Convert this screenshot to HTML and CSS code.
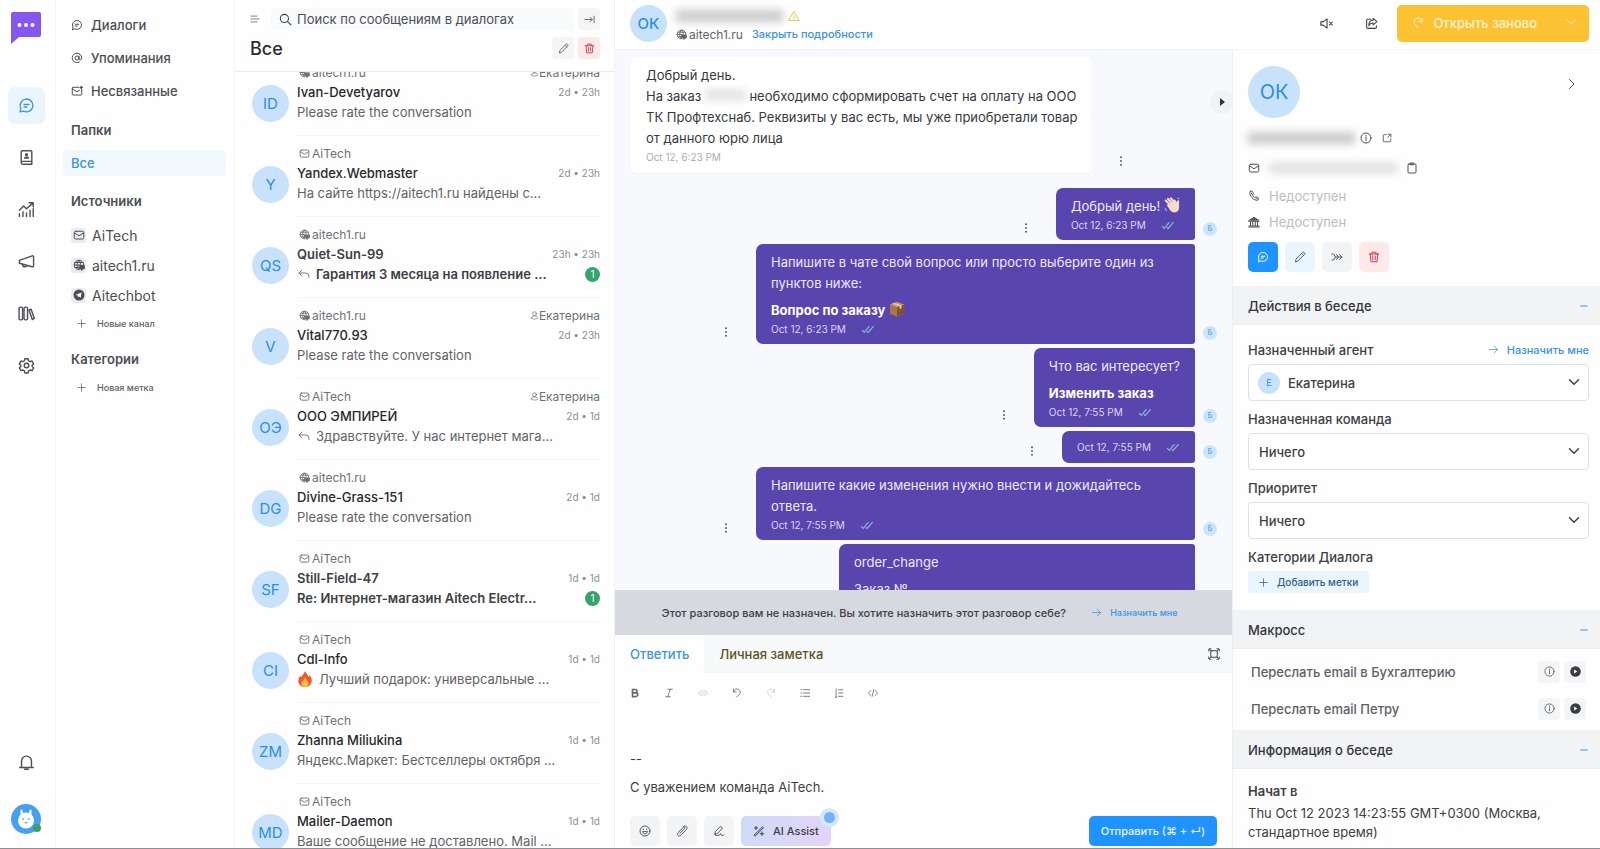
FILE: index.html
```
<!DOCTYPE html>
<html lang="ru">
<head>
  <meta charset="UTF-8">
  <meta name="viewport" content="width=device-width, initial-scale=1">
  <title>Диалоги</title>
  <link rel="stylesheet" href="styles.css">
</head>
<body>

  <svg class="sprite" aria-hidden="true">
    <symbol id="i-chat" viewBox="0 0 24 24"><path d="M3 21l1-5a9 9 0 1 1 4 4z"/><path d="M8.5 10.5h7M8.5 14h4"/></symbol>
    <symbol id="i-contact" viewBox="0 0 24 24"><path d="M6 2.5h12A1.5 1.5 0 0 1 19.5 4v17.5H6.5a2 2 0 0 1-2-2V4A1.5 1.5 0 0 1 6 2.5zM4.5 19a2 2 0 0 1 2-1.5h13"/><circle cx="12" cy="8" r="1.2" fill="currentColor"/><path d="M9.200 12.800c.5-1.800 5.100-1.800 5.600 0z" fill="currentColor"/></symbol>
    <symbol id="i-report" viewBox="0 0 24 24"><path d="M2 13l6-6 4 4 9-8M15.500 2.500H21.500V8.500M2 18v4M7 15v7M12 17v5M17 13v9M21.500 11v11"/></symbol>
    <symbol id="i-horn" viewBox="0 0 24 24"><path d="M2 10.500L20 4a1.500 1.500 0 0 1 2 1.400V18a1.500 1.500 0 0 1-2 1.400L2 14.500zM6 16c.5 4 5.500 4.500 6.500 1.500"/></symbol>
    <symbol id="i-library" viewBox="0 0 24 24"><rect x="1.500" y="3" width="5" height="18" rx="2"/><rect x="8.500" y="3" width="5" height="18" rx="2"/><path d="M15.500 7l3-1 4.500 13-2.800 1.500z"/></symbol>
    <symbol id="i-gear" viewBox="0 0 24 24"><circle cx="12" cy="12" r="3.200"/><path d="M9.700 2.500h4.600l.6 2.800 2.200 1.300 2.700-.9 2.300 4-2.100 1.900v1.800l2.100 1.900-2.300 4-2.700-.9-2.200 1.300-.6 2.800H9.700l-.6-2.800-2.200-1.300-2.700.9-2.300-4L4 13.400v-1.800L1.900 9.700l2.300-4 2.700.9 2.200-1.300z"/></symbol>
    <symbol id="i-bell" viewBox="0 0 24 24"><path d="M5 19V10a7 7 0 0 1 14 0v9M2.500 19h19M9.500 21.500h5"/></symbol>
    <symbol id="i-at" viewBox="0 0 24 24"><circle cx="12" cy="12" r="4"/><path d="M16 8v5.500c0 4 5.500 3 5.500-1.500A9.500 9.500 0 1 0 17 20"/></symbol>
    <symbol id="i-mail" viewBox="0 0 24 24"><rect x="2.500" y="4.500" width="19" height="15.500" rx="3"/><path d="M3 8l9 5.500L21 8"/></symbol>
    <symbol id="i-mail-dot" viewBox="0 0 24 24"><path d="M16 4.500H4A1.500 1.500 0 0 0 2.500 6v12.500A1.500 1.500 0 0 0 4 20h16a1.500 1.500 0 0 0 1.500-1.500V9M3 8l9 5.500 5-3"/><circle cx="20.500" cy="5" r="2" fill="currentColor"/></symbol>
    <symbol id="i-globe" viewBox="0 0 24 24"><path d="M12 21.500a9.500 9.500 0 1 1 9.500-9.500M2.500 12H13M4 7h16M4 17h7M12 2.500c-5.500 5-5.500 14 0 19M12 2.500c2 2 3.500 5 3.700 8.500"/><path d="M13 13h9.500v6.500H19L17.500 23 16 19.500h-3z" fill="currentColor"/></symbol>
    <symbol id="i-telegram" viewBox="0 0 24 24"><circle cx="12" cy="12" r="11" fill="currentColor" stroke="none"/><path d="M5 12l12-5-1.500 10.500-4-3-1.500 2-.8-3.500z" fill="#fff" stroke="none"/></symbol>
    <symbol id="i-plus" viewBox="0 0 24 24"><path d="M12 2v20M2 12h20"/></symbol>
    <symbol id="i-minus" viewBox="0 0 24 24"><path d="M2 12h20"/></symbol>
    <symbol id="i-menu" viewBox="0 0 24 24"><path d="M2 5h15M2 12h20M2 19h15"/></symbol>
    <symbol id="i-search" viewBox="0 0 24 24"><circle cx="10" cy="10" r="7.500"/><path d="M15.500 15.500L22 22"/></symbol>
    <symbol id="i-collapse" viewBox="0 0 24 24"><path d="M2 12h16M13 7l5 5-5 5M22 5v14"/></symbol>
    <symbol id="i-pencil" viewBox="0 0 24 24"><path d="M3 21l1.200-5L17.500 2.800a2 2 0 0 1 2.800 0l1 1a2 2 0 0 1 0 2.800L8 19.800zM15.500 5l3.800 3.800"/></symbol>
    <symbol id="i-trash" viewBox="0 0 24 24"><path d="M2.500 6h19M8 6V2.500h8V6M4.500 6l1.500 15.500h12L19.500 6M9.500 10v7.500M14.500 10v7.500"/></symbol>
    <symbol id="i-user" viewBox="0 0 24 24"><circle cx="12" cy="7" r="5"/><path d="M3.500 18.500c0-7 17-7 17 0 0 4-17 4-17 0z"/></symbol>
    <symbol id="i-reply" viewBox="0 0 24 24"><path d="M8 4L2 10l6 6M2 10h13a7 7 0 0 1 7 7v2"/></symbol>
    <symbol id="i-warn" viewBox="0 0 24 24"><path d="M12 3l10 18H2zM12 10v5M12 17v1.500"/></symbol>
    <symbol id="i-mute" viewBox="0 0 24 24"><path d="M1.500 9v6H6l7 5.500V3.500L6 9zM17.500 9.500l5 5M22.500 9.500l-5 5"/></symbol>
    <symbol id="i-share" viewBox="0 0 24 24"><path d="M11 4H5a2 2 0 0 0-2 2v13a2 2 0 0 0 2 2h14a2 2 0 0 0 2-2v-3M15 2.500l7 6-7 6V11c-4 0-6 1-8 5 0-7 3-10 8-10z"/></symbol>
    <symbol id="i-redo" viewBox="0 0 24 24"><path d="M20.500 3v6.500H14M20 9A8 8 0 1 0 8 17l5 5"/></symbol>
    <symbol id="i-undo" viewBox="0 0 24 24"><path d="M3.500 3v6.500H10M4 9a8 8 0 1 1 12 8l-5 5"/></symbol>
    <symbol id="i-down" viewBox="0 0 24 24"><path d="M3 7.500l9 9 9-9"/></symbol>
    <symbol id="i-right" viewBox="0 0 24 24"><path d="M7 3l9 9-9 9"/></symbol>
    <symbol id="i-arrow" viewBox="0 0 24 24"><path d="M1 12h22M14 3l9 9-9 9"/></symbol>
    <symbol id="i-dots" viewBox="0 0 24 24"><g fill="currentColor" stroke="none"><circle cx="12" cy="3" r="2.200"/><circle cx="12" cy="12" r="2.200"/><circle cx="12" cy="21" r="2.200"/></g></symbol>
    <symbol id="i-ticks" viewBox="0 0 24 16"><path d="M1.500 9l4 4L14.500 2M10 11.500l2 2L22 2"/></symbol>
    <symbol id="i-expand" viewBox="0 0 24 24"><rect x="5.500" y="5.500" width="13" height="13" rx="2"/><path d="M1.500 6V3a1.500 1.500 0 0 1 1.500-1.500h3M18 1.500h3A1.500 1.500 0 0 1 22.500 3v3M22.500 18v3a1.500 1.500 0 0 1-1.500 1.500h-3M6 22.500H3A1.500 1.500 0 0 1 1.500 21v-3M2.500 2.500l3.500 3.500M21.500 2.500L18 6M21.500 21.500L18 18M2.500 21.500L6 18"/></symbol>
    <symbol id="i-bold" viewBox="0 0 24 24"><path d="M6 3.500h7a4 4 0 0 1 0 8H6zM6 11.500h8a4.500 4.500 0 0 1 0 9H6z"/></symbol>
    <symbol id="i-italic" viewBox="0 0 24 24"><path d="M9 3h11M4 21h11M15 3L9 21"/></symbol>
    <symbol id="i-link" viewBox="0 0 24 24"><path d="M10 7H7a5 5 0 0 0 0 10h3M14 7h3a5 5 0 0 1 0 10h-3M8 12h8"/></symbol>
    <symbol id="i-ul" viewBox="0 0 24 24"><path d="M8 4h15M8 12h15M8 20h15M2 4h2M2 12h2M2 20h2"/></symbol>
    <symbol id="i-ol" viewBox="0 0 24 24"><path d="M11 4h10M11 12h10M11 20h10M5 2v7M5 11v4M5 17v5M3 22h4"/></symbol>
    <symbol id="i-code" viewBox="0 0 24 24"><path d="M7 6l-6 6 6 6M17 6l6 6-6 6M14 4l-4 16"/></symbol>
    <symbol id="i-smile" viewBox="0 0 24 24"><circle cx="12" cy="12" r="10"/><path d="M7 14c1.500 5 8.500 5 10 0zM8.500 8v1.500M15.500 8v1.500"/></symbol>
    <symbol id="i-clip" viewBox="0 0 24 24"><path d="M8 17L17 7c2-2-.5-4.500-2.500-2.500L4.500 15c-4 4.500 1.500 9.500 5.500 5.500L20.500 9.500C25 4 19 0 15 3"/></symbol>
    <symbol id="i-sign" viewBox="0 0 24 24"><path d="M4 18l1-5L15 2.500l4 3.500L9 17zM4 18c-3 4 8 4 10 1 1-3 3-2 2 1 2 1.500 4 1.500 6 0"/></symbol>
    <symbol id="i-wand" viewBox="0 0 24 24"><path d="M2.500 20L19 3.500l2 2L4.500 22zM6 3v6M3 6h6M18 14v7M14.500 17.500h7"/></symbol>
    <symbol id="i-info" viewBox="0 0 24 24"><circle cx="12" cy="12" r="10"/><path d="M12 10.500V17M12 6.500v1.500"/></symbol>
    <symbol id="i-open" viewBox="0 0 24 24"><path d="M10 4H5a2 2 0 0 0-2 2v13a2 2 0 0 0 2 2h14a2 2 0 0 0 2-2v-5M15 3h6.500v6.500M21 3l-7 7"/></symbol>
    <symbol id="i-board" viewBox="0 0 24 24"><rect x="4" y="4" width="16" height="18" rx="2"/><path d="M9 2h6v3.500H9z"/></symbol>
    <symbol id="i-phone" viewBox="0 0 24 24"><path d="M5 2.500C9 .5 12 6 9.500 9c-1.500 2 3 7 5.500 5.500 3-2.500 8 2 5.500 5C15 25-2 9 5 2.500zM6.500 6l2 3M16 16l3 2"/></symbol>
    <symbol id="i-bank" viewBox="0 0 24 24"><path d="M2 9l10-6.500L22 9v1.500H2zM5 11v8M9.500 11v8M14.500 11v8M19 11v8M2 20h20M1.500 22h21"/><path d="M6 8l6-4 6 4z" fill="currentColor"/></symbol>
    <symbol id="i-merge" viewBox="0 0 24 24"><path d="M2 6h3l4 6h13M2 18h3l4-6M17 7l5 5-5 5M11 7l4 5-4 5"/></symbol>
    <symbol id="i-play" viewBox="0 0 24 24"><circle cx="12" cy="12" r="11.500" fill="currentColor" stroke="none"/><path d="M9 7.500v9l7-4.500z" fill="#fff" stroke="none"/></symbol>
  </svg>

  <div class="app">

    <nav class="rail" aria-label="Главное меню">
      <a class="logo" href="#">
        <svg viewBox="0 0 30 32"><path d="M2 0h26a2 2 0 0 1 2 2v21a2 2 0 0 1-2 2H8l-8 7V2a2 2 0 0 1 2-2z" fill="#8657ee"/><g fill="#fff"><circle cx="8.500" cy="13" r="2"/><circle cx="15" cy="13" r="2"/><circle cx="21.500" cy="13" r="2"/></g></svg>
      </a>
      <div class="rail-menu">
        <a class="rail-item active" href="#" aria-label="Диалоги"><svg class="icon"><use href="#i-chat"/></svg></a>
        <a class="rail-item" href="#" aria-label="Контакты"><svg class="icon"><use href="#i-contact"/></svg></a>
        <a class="rail-item" href="#" aria-label="Отчеты"><svg class="icon"><use href="#i-report"/></svg></a>
        <a class="rail-item" href="#" aria-label="Кампании"><svg class="icon"><use href="#i-horn"/></svg></a>
        <a class="rail-item" href="#" aria-label="Справка"><svg class="icon"><use href="#i-library"/></svg></a>
        <a class="rail-item" href="#" aria-label="Настройки"><svg class="icon"><use href="#i-gear"/></svg></a>
      </div>
      <a class="rail-item bell" href="#" aria-label="Уведомления"><svg class="icon"><use href="#i-bell"/></svg></a>
      <button class="me" aria-label="Профиль">
        <svg viewBox="0 0 30 30"><circle cx="15" cy="15" r="15" fill="#479ff0"/><g fill="#fff"><path d="M9.500 6q1.500-1 2 .5l1 5h-3zM20.500 6q-1.500-1-2 .5l-1 5h3z"/><circle cx="15" cy="16.500" r="8"/></g><g fill="#7bb8b0"><circle cx="12" cy="15" r="1"/><circle cx="18" cy="15" r="1"/><path d="M13 18h4l-2 2z"/></g></svg>
        <span class="online"></span>
      </button>
    </nav>

    <aside class="sidebar">
      <a class="side-link" href="#"><svg class="icon"><use href="#i-chat"/></svg>Диалоги</a>
      <a class="side-link" href="#"><svg class="icon"><use href="#i-at"/></svg>Упоминания</a>
      <a class="side-link" href="#"><svg class="icon"><use href="#i-mail-dot"/></svg>Несвязанные</a>
      <h2>Папки</h2>
      <a class="folder" href="#">Все</a>
      <h2>Источники</h2>
      <a class="source" href="#"><span class="source-icon"><svg class="icon"><use href="#i-mail"/></svg></span>AiTech</a>
      <a class="source" href="#"><span class="source-icon"><svg class="icon"><use href="#i-globe"/></svg></span>aitech1.ru</a>
      <a class="source" href="#"><span class="source-icon"><svg class="icon"><use href="#i-telegram"/></svg></span>Aitechbot</a>
      <button class="add"><svg class="icon"><use href="#i-plus"/></svg>Новые канал</button>
      <h2>Категории</h2>
      <button class="add"><svg class="icon"><use href="#i-plus"/></svg>Новая метка</button>
    </aside>

    <section class="list">
      <header class="list-head">
        <div class="list-row">
          <button class="plain" aria-label="Меню"><svg class="icon"><use href="#i-menu"/></svg></button>
          <label class="search"><svg class="icon"><use href="#i-search"/></svg><input type="text" aria-label="Поиск" placeholder="Поиск по сообщениям в диалогах"></label>
          <button class="mini" aria-label="Свернуть"><svg class="icon"><use href="#i-collapse"/></svg></button>
        </div>
        <div class="list-row">
          <h1>Все</h1>
          <button class="mini" aria-label="Изменить"><svg class="icon"><use href="#i-pencil"/></svg></button>
          <button class="mini red" aria-label="Удалить"><svg class="icon"><use href="#i-trash"/></svg></button>
        </div>
      </header>
      <div class="cards">
        <div class="cards-inner">
          <article class="card">
            <span class="avatar">ID</span>
            <div class="card-body">
              <div class="card-meta"><svg class="icon"><use href="#i-globe"/></svg>aitech1.ru<span class="agent"><svg class="icon"><use href="#i-user"/></svg>Екатерина</span></div>
              <div class="card-line"><h3>Ivan-Devetyarov</h3><time>2d • 23h</time></div>
              <div class="card-line"><p>Please rate the conversation</p></div>
            </div>
          </article>
          <article class="card">
            <span class="avatar">Y</span>
            <div class="card-body">
              <div class="card-meta"><svg class="icon"><use href="#i-mail"/></svg>AiTech</div>
              <div class="card-line"><h3>Yandex.Webmaster</h3><time>2d • 23h</time></div>
              <div class="card-line"><p>На сайте https://aitech1.ru найдены с…</p></div>
            </div>
          </article>
          <article class="card unread">
            <span class="avatar">QS</span>
            <div class="card-body">
              <div class="card-meta"><svg class="icon"><use href="#i-globe"/></svg>aitech1.ru</div>
              <div class="card-line"><h3>Quiet-Sun-99</h3><time>23h • 23h</time></div>
              <div class="card-line"><svg class="icon"><use href="#i-reply"/></svg><p>Гарантия 3 месяца на появление …</p><span class="count">1</span></div>
            </div>
          </article>
          <article class="card">
            <span class="avatar">V</span>
            <div class="card-body">
              <div class="card-meta"><svg class="icon"><use href="#i-globe"/></svg>aitech1.ru<span class="agent"><svg class="icon"><use href="#i-user"/></svg>Екатерина</span></div>
              <div class="card-line"><h3>Vital770.93</h3><time>2d • 23h</time></div>
              <div class="card-line"><p>Please rate the conversation</p></div>
            </div>
          </article>
          <article class="card">
            <span class="avatar">ОЭ</span>
            <div class="card-body">
              <div class="card-meta"><svg class="icon"><use href="#i-mail"/></svg>AiTech<span class="agent"><svg class="icon"><use href="#i-user"/></svg>Екатерина</span></div>
              <div class="card-line"><h3>ООО ЭМПИРЕЙ</h3><time>2d • 1d</time></div>
              <div class="card-line"><svg class="icon"><use href="#i-reply"/></svg><p>Здравствуйте. У нас интернет мага…</p></div>
            </div>
          </article>
          <article class="card">
            <span class="avatar">DG</span>
            <div class="card-body">
              <div class="card-meta"><svg class="icon"><use href="#i-globe"/></svg>aitech1.ru</div>
              <div class="card-line"><h3>Divine-Grass-151</h3><time>2d • 1d</time></div>
              <div class="card-line"><p>Please rate the conversation</p></div>
            </div>
          </article>
          <article class="card unread">
            <span class="avatar">SF</span>
            <div class="card-body">
              <div class="card-meta"><svg class="icon"><use href="#i-mail"/></svg>AiTech</div>
              <div class="card-line"><h3>Still-Field-47</h3><time>1d • 1d</time></div>
              <div class="card-line"><p>Re: Интернет-магазин Aitech Electr…</p><span class="count">1</span></div>
            </div>
          </article>
          <article class="card">
            <span class="avatar">CI</span>
            <div class="card-body">
              <div class="card-meta"><svg class="icon"><use href="#i-mail"/></svg>AiTech</div>
              <div class="card-line"><h3>Cdl-Info</h3><time>1d • 1d</time></div>
              <div class="card-line">
                <svg class="emoji" viewBox="0 0 18 18"><path d="M9 0c1 3 3.500 4 4 7 .8-.6 1-1.500 1-2.500 2 2 3 4.500 2.500 7.500C15.800 16 12.500 18 9 18s-7-2-7.500-6C1.200 9 2.500 7 4 5c0 1 .3 2 1 2.500C5 5 8 3.500 9 0z" fill="#f0592b"/><path d="M9 7c.5 2.500 4 4 4 7 0 2.500-2 4-4 4s-4-1.500-4-4c0-2.500 3-3.500 4-7z" fill="#fbc13d"/></svg>
                <p>Лучший подарок: универсальные …</p>
              </div>
            </div>
          </article>
          <article class="card">
            <span class="avatar">ZM</span>
            <div class="card-body">
              <div class="card-meta"><svg class="icon"><use href="#i-mail"/></svg>AiTech</div>
              <div class="card-line"><h3>Zhanna Miliukina</h3><time>1d • 1d</time></div>
              <div class="card-line"><p>Яндекс.Маркет: Бестселлеры октября …</p></div>
            </div>
          </article>
          <article class="card">
            <span class="avatar">MD</span>
            <div class="card-body">
              <div class="card-meta"><svg class="icon"><use href="#i-mail"/></svg>AiTech</div>
              <div class="card-line"><h3>Mailer-Daemon</h3><time>1d • 1d</time></div>
              <div class="card-line"><p>Ваше сообщение не доставлено. Mail …</p></div>
            </div>
          </article>
        </div>
      </div>
    </section>

    <div class="work">
      <header class="work-head">
        <span class="avatar">ОК</span>
        <div class="who">
          <div class="who-line"><span class="hidden-text name"></span><svg class="icon warn"><use href="#i-warn"/></svg></div>
          <div class="who-line"><svg class="icon"><use href="#i-globe"/></svg><span class="who-site">aitech1.ru</span><a href="#">Закрыть подробности</a></div>
        </div>
        <button class="plain" aria-label="Без звука"><svg class="icon"><use href="#i-mute"/></svg></button>
        <button class="plain" aria-label="Поделиться"><svg class="icon"><use href="#i-share"/></svg></button>
        <div class="reopen">
          <button class="reopen-main"><svg class="icon"><use href="#i-redo"/></svg>Открыть заново</button>
          <button class="reopen-more" aria-label="Еще"><svg class="icon"><use href="#i-down"/></svg></button>
        </div>
      </header>

      <div class="panes">
        <main class="chat">
          <div class="messages">
            <button class="handle" aria-label="Скрыть панель"></button>
            <div class="msg in">
              <div class="bubble">
                <p>Добрый день.<br>На заказ <span class="hidden-text order"></span> необходимо сформировать счет на оплату на ООО ТК Профтехснаб. Реквизиты у вас есть, мы уже приобретали товар от данного юрю лица</p>
                <div class="stamp">Oct 12, 6:23 PM</div>
              </div>
              <button class="more" aria-label="Действия"><svg class="icon"><use href="#i-dots"/></svg></button>
            </div>
            <div class="msg out">
              <button class="more" aria-label="Действия"><svg class="icon"><use href="#i-dots"/></svg></button>
              <div class="bubble">
                <p>Добрый день! <svg class="emoji" viewBox="0 0 18 18"><path d="M2 4l5 5M4.500 2l5 6M8 1.500l4 6M12 4l2 5" stroke="#f5dcc8" stroke-width="2.400" stroke-linecap="round"/><path d="M3 9l4-2 7-1 1.500-2.500 1.500 1V11c0 8-8 7.500-10 4z" fill="#f5dcc8"/><path d="M1 12l2 4M15 1l2 1" stroke="#b9d7e8" stroke-width="1"/></svg></p>
                <div class="stamp">Oct 12, 6:23 PM<svg class="ticks"><use href="#i-ticks"/></svg></div>
              </div>
              <span class="bot">Б</span>
            </div>
            <div class="msg out">
              <button class="more" aria-label="Действия"><svg class="icon"><use href="#i-dots"/></svg></button>
              <div class="bubble">
                <p>Напишите в чате свой вопрос или просто выберите один из пунктов ниже:</p>
                <p><b>Вопрос по заказу</b> <svg class="emoji" viewBox="0 0 18 18"><path d="M1 4l8-3 8 3v10l-8 4-8-4z" fill="#a8744c"/><path d="M9 7l8-3v10l-8 4z" fill="#7d5236"/><path d="M1 4l8-3 8 3-8 3z" fill="#c99468"/><path d="M4 3l8 3v3l2-.8V5L6 2z" fill="#ead0a8"/></svg></p>
                <div class="stamp">Oct 12, 6:23 PM<svg class="ticks"><use href="#i-ticks"/></svg></div>
              </div>
              <span class="bot">Б</span>
            </div>
            <div class="msg out">
              <button class="more" aria-label="Действия"><svg class="icon"><use href="#i-dots"/></svg></button>
              <div class="bubble">
                <p>Что вас интересует?</p>
                <p><b>Изменить заказ</b></p>
                <div class="stamp">Oct 12, 7:55 PM<svg class="ticks"><use href="#i-ticks"/></svg></div>
              </div>
              <span class="bot">Б</span>
            </div>
            <div class="msg out">
              <button class="more" aria-label="Действия"><svg class="icon"><use href="#i-dots"/></svg></button>
              <div class="bubble">
                <div class="stamp">Oct 12, 7:55 PM<svg class="ticks"><use href="#i-ticks"/></svg></div>
              </div>
              <span class="bot">Б</span>
            </div>
            <div class="msg out">
              <button class="more" aria-label="Действия"><svg class="icon"><use href="#i-dots"/></svg></button>
              <div class="bubble">
                <p>Напишите какие изменения нужно внести и дожидайтесь ответа.</p>
                <div class="stamp">Oct 12, 7:55 PM<svg class="ticks"><use href="#i-ticks"/></svg></div>
              </div>
              <span class="bot">Б</span>
            </div>
            <div class="msg out">
              <div class="bubble order-form">
                <p>order_change</p>
                <p>Заказ №</p>
              </div>
              <span class="bot">Б</span>
            </div>
          </div>

          <div class="banner">
            <span>Этот разговор вам не назначен. Вы хотите назначить этот разговор себе?</span>
            <button class="assign"><svg class="icon"><use href="#i-arrow"/></svg>Назначить мне</button>
          </div>

          <div class="tabs">
            <button class="tab active">Ответить</button>
            <button class="tab note">Личная заметка</button>
            <button class="plain" aria-label="Развернуть"><svg class="icon"><use href="#i-expand"/></svg></button>
          </div>

          <div class="editor">
            <div class="tools">
              <button class="plain strong" aria-label="Жирный"><svg class="icon"><use href="#i-bold"/></svg></button>
              <button class="plain" aria-label="Курсив"><svg class="icon"><use href="#i-italic"/></svg></button>
              <button class="plain off" aria-label="Ссылка"><svg class="icon"><use href="#i-link"/></svg></button>
              <button class="plain" aria-label="Отменить"><svg class="icon"><use href="#i-undo"/></svg></button>
              <button class="plain off" aria-label="Повторить"><svg class="icon"><use href="#i-redo"/></svg></button>
              <button class="plain" aria-label="Список"><svg class="icon"><use href="#i-ul"/></svg></button>
              <button class="plain" aria-label="Нумерация"><svg class="icon"><use href="#i-ol"/></svg></button>
              <button class="plain" aria-label="Код"><svg class="icon"><use href="#i-code"/></svg></button>
            </div>
            <textarea aria-label="Ответ">

--
С уважением команда AiTech.</textarea>
            <div class="actions">
              <button class="square" aria-label="Эмодзи"><svg class="icon"><use href="#i-smile"/></svg></button>
              <button class="square" aria-label="Вложение"><svg class="icon"><use href="#i-clip"/></svg></button>
              <button class="square" aria-label="Подпись"><svg class="icon"><use href="#i-sign"/></svg></button>
              <button class="ai"><svg class="icon"><use href="#i-wand"/></svg>AI Assist<span class="pulse"></span></button>
              <button class="send">Отправить (⌘ + ↵)</button>
            </div>
          </div>
        </main>

        <aside class="details">
          <div class="contact">
            <div class="contact-top">
              <span class="avatar big">ОК</span>
              <button class="plain" aria-label="Закрыть"><svg class="icon"><use href="#i-right"/></svg></button>
            </div>
            <div class="contact-name"><span class="hidden-text name"></span><svg class="icon"><use href="#i-info"/></svg><svg class="icon small"><use href="#i-open"/></svg></div>
            <div class="contact-row mail-row"><svg class="icon"><use href="#i-mail"/></svg><span class="hidden-text mail"></span><svg class="icon"><use href="#i-board"/></svg></div>
            <div class="contact-row"><svg class="icon"><use href="#i-phone"/></svg>Недоступен</div>
            <div class="contact-row"><svg class="icon"><use href="#i-bank"/></svg>Недоступен</div>
            <div class="contact-actions">
              <button class="square blue" aria-label="Сообщение"><svg class="icon"><use href="#i-chat"/></svg></button>
              <button class="square sky" aria-label="Изменить"><svg class="icon"><use href="#i-pencil"/></svg></button>
              <button class="square" aria-label="Объединить"><svg class="icon"><use href="#i-merge"/></svg></button>
              <button class="square red" aria-label="Удалить"><svg class="icon"><use href="#i-trash"/></svg></button>
            </div>
          </div>

          <button class="section">Действия в беседе<svg class="icon"><use href="#i-minus"/></svg></button>
          <div class="form">
            <div class="label-row">
              <label for="agent">Назначенный агент</label>
              <button class="assign"><svg class="icon"><use href="#i-arrow"/></svg>Назначить мне</button>
            </div>
            <div class="select with-avatar">
              <span class="mini-avatar">E</span>
              <select id="agent"><option>Екатерина</option></select>
              <svg class="icon"><use href="#i-down"/></svg>
            </div>
            <div class="label-row"><label for="team">Назначенная команда</label></div>
            <div class="select">
              <select id="team"><option>Ничего</option></select>
              <svg class="icon"><use href="#i-down"/></svg>
            </div>
            <div class="label-row"><label for="priority">Приоритет</label></div>
            <div class="select">
              <select id="priority"><option>Ничего</option></select>
              <svg class="icon"><use href="#i-down"/></svg>
            </div>
            <div class="label-row">Категории Диалога</div>
            <button class="tag-add"><svg class="icon"><use href="#i-plus"/></svg>Добавить метки</button>
          </div>

          <button class="section">Макросс<svg class="icon"><use href="#i-minus"/></svg></button>
          <div class="macros">
            <div class="macro"><span>Переслать email в Бухгалтерию</span>
              <button class="mini" aria-label="Информация"><svg class="icon"><use href="#i-info"/></svg></button>
              <button class="mini dark" aria-label="Запустить"><svg class="icon"><use href="#i-play"/></svg></button></div>
            <div class="macro"><span>Переслать email Петру</span>
              <button class="mini" aria-label="Информация"><svg class="icon"><use href="#i-info"/></svg></button>
              <button class="mini dark" aria-label="Запустить"><svg class="icon"><use href="#i-play"/></svg></button></div>
          </div>

          <button class="section">Информация о беседе<svg class="icon"><use href="#i-minus"/></svg></button>
          <div class="facts">
            <h4>Начат в</h4>
            <p>Thu Oct 12 2023 14:23:55 GMT+0300 (Москва, стандартное время)</p>
          </div>
        </aside>
      </div>
    </div>
  </div>

</body>
</html>
```

FILE: styles.css
```
* {
  box-sizing: border-box;
}
body {
  margin: 0;
  font-family: Inter, "Liberation Sans", sans-serif;
  font-size: 14px;
  color: #3d4045;
  background: #fefefe;
}
h1, h2, h3, h4, p {
  margin: 0;
  font-weight: 500;
}
a {
  color: inherit;
  text-decoration: none;
}
button, input, select, textarea {
  font: inherit;
  color: inherit;
  border: 0;
  padding: 0;
  background: none;
}
.sprite {
  display: none;
}
.icon {
  flex: none;
  width: 12px;
  height: 12px;
  fill: none;
  stroke: currentColor;
  stroke-width: 2;
  stroke-linecap: round;
  stroke-linejoin: round;
}
.plain, .mini, .square {
  display: flex;
  align-items: center;
  justify-content: center;
  flex: none;
}
.mini {
  width: 22px;
  height: 22px;
  border-radius: 4px;
  background: #f3f5f7;
  color: #63676d;
}
.mini .icon {
  width: 11px;
  height: 11px;
}
.square {
  width: 30px;
  height: 30px;
  border-radius: 5px;
  background: #f3f4f6;
  color: #55585e;
}
.mini.red, .square.red {
  background: #fde8ea;
  color: #c43d50;
}
.avatar {
  display: flex;
  align-items: center;
  justify-content: center;
  flex: none;
  width: 37px;
  height: 37px;
  border-radius: 50%;
  background: #c8e2fc;
  color: #2b8fe0;
  font-size: 15px;
}
.work-head .avatar {
  font-weight: 500;
}
.hidden-text {
  display: inline-block;
  height: 12px;
  background: #c9c9cb;
  filter: blur(4px);
}
.emoji {
  width: 16px;
  height: 16px;
  flex: none;
  fill: none;
  vertical-align: -2px;
}

.app {
  display: grid;
  grid-template-columns: 56px 179px 380px 1fr;
  height: 100vh;
  overflow: hidden;
  border-bottom: 1px solid #8e8e90;
}

/* left rail */
.rail {
  display: flex;
  flex-direction: column;
  align-items: center;
  padding: 12px 3px 14px 0;
  border-right: 1px solid #f3f4f6;
  color: #4d5056;
}
.logo {
  width: 30px;
  height: 32px;
}
.rail-menu {
  display: flex;
  flex-direction: column;
  gap: 15px;
  margin-top: 43px;
}
.rail-item {
  display: flex;
  align-items: center;
  justify-content: center;
  width: 37px;
  height: 37px;
  border-radius: 7px;
}
.rail-item .icon {
  width: 17px;
  height: 17px;
}
.rail-item.active {
  background: #ebf5fe;
  color: #3b94dd;
}
.bell {
  margin: auto 0 23px;
}
.me {
  position: relative;
  width: 30px;
  height: 30px;
}
.online {
  position: absolute;
  right: 0;
  bottom: 2px;
  width: 8px;
  height: 8px;
  border-radius: 50%;
  background: #38a169;
}

/* folders */
.sidebar {
  padding: 8px 8px 0 7px;
  border-right: 1px solid #f3f4f6;
  color: #4b4e54;
  font-size: 13px;
  font-weight: 500;
}
.side-link, .source, .folder {
  display: flex;
  align-items: center;
  padding: 0 8px;
}
.side-link {
  gap: 8px;
  height: 33px;
}
.sidebar h2 {
  margin: 15px 8px 11px;
  font-size: 13px;
  line-height: 17px;
  font-weight: 600;
}
.folder {
  height: 26px;
  border-radius: 4px;
  background: #f1f9fe;
  color: #3b94dd;
}
.folder + h2 {
  margin: 17px 8px 10px;
}
.source {
  gap: 6px;
  height: 30px;
  font-size: 14px;
  font-weight: 400;
}
.source-icon {
  display: flex;
  align-items: center;
  justify-content: center;
  width: 15px;
  height: 15px;
  border-radius: 3px;
  background: #e9ebee;
}
.add {
  display: flex;
  align-items: center;
  gap: 11px;
  height: 26px;
  padding: 0 14px;
  font-size: 9px;
  font-weight: 500;
  color: #5d6066;
}
.add .icon {
  width: 9px;
  height: 9px;
}
.add + h2 {
  margin-bottom: 6px;
}

/* conversation list */
.list {
  display: flex;
  flex-direction: column;
  min-height: 0;
  border-right: 1px solid #f0f2f4;
}
.list-head {
  display: grid;
  gap: 7px;
  padding: 8px 14px 12px 15px;
  border-bottom: 1px solid #eaecee;
}
.list-row {
  display: flex;
  align-items: center;
  gap: 4px;
  height: 22px;
}
.list-row .plain {
  width: 17px;
  justify-content: flex-start;
  color: #6b6f75;
}
.list-row .plain .icon {
  width: 10px;
}
.search {
  display: flex;
  align-items: center;
  gap: 5px;
  flex: 1;
  height: 22px;
  padding-left: 8px;
  border-radius: 4px;
  background: #f8fafb;
}
.search .icon {
  width: 13px;
  height: 13px;
}
.search input {
  flex: 1;
  min-width: 0;
  font-size: 13px;
}
.search input::placeholder {
  color: #4d5056;
  opacity: 1;
}
.list h1 {
  flex: 1;
  font-size: 18px;
  color: #2a2c30;
}
.cards {
  flex: 1;
  min-height: 0;
  overflow: hidden;
}
.cards-inner {
  margin-top: -17px;
}
.card {
  display: flex;
  gap: 8px;
  height: 81px;
  padding-left: 17px;
  padding-right: 14px;
}
.card .avatar {
  margin-top: 30px;
}
.card-body {
  flex: 1;
  min-width: 0;
  padding-top: 8px;
  border-bottom: 1px solid #f3f4f6;
}
.card-meta {
  display: flex;
  align-items: center;
  gap: 2px;
  height: 19px;
  padding-left: 2px;
  font-size: 12px;
  color: #6d7177;
}
.card-meta .icon {
  width: 11px;
  height: 11px;
}
.agent {
  display: flex;
  align-items: center;
  margin-left: auto;
}
.agent .icon {
  width: 9px;
}
.card-line {
  display: flex;
  align-items: center;
  height: 20px;
  white-space: nowrap;
}
.card-line .icon {
  margin: 0 6px 0 1px;
  color: #777b81;
}
.card-line .emoji {
  margin-right: 6px;
}
.card h3 {
  font-size: 13px;
  color: #26282c;
}
.card p {
  font-size: 13px;
  font-weight: 400;
  color: #5f6369;
}
.card time {
  margin-left: auto;
  font-size: 10px;
  color: #8b8f95;
}
.card.unread h3, .card.unread p {
  font-weight: 600;
  color: #3d4045;
}
.count {
  width: 15px;
  height: 15px;
  margin-left: auto;
  border-radius: 50%;
  background: #35a46d;
  color: #fff;
  font-size: 10px;
  line-height: 15px;
  text-align: center;
}

/* conversation header */
.work {
  display: flex;
  flex-direction: column;
  min-width: 0;
  min-height: 0;
}
.work-head {
  display: flex;
  align-items: center;
  height: 50px;
  padding: 0 11px 3px 15px;
  border-bottom: 1px solid #f1f3f5;
}
.who {
  flex: 1;
  padding: 4px 0 0 9px;
}
.who-line {
  display: flex;
  align-items: center;
  height: 18px;
  font-size: 12px;
  color: #5f6369;
}
.who-line a {
  margin-left: 9px;
  font-size: 11px;
  font-weight: 500;
  color: #3b94dd;
}
.who-line .icon {
  width: 11px;
  height: 11px;
}
.who-site {
  padding-left: 2px;
}
.hidden-text.name {
  width: 107px;
}
.who-line .warn {
  width: 12px;
  height: 12px;
  margin-left: 5px;
  color: #f3c64b;
}
.work-head .plain {
  width: 45px;
}
.work-head .plain .icon {
  width: 13px;
  height: 13px;
}
.reopen {
  display: flex;
  height: 37px;
  margin-left: 3px;
  border-radius: 5px;
  background: #fdc233;
  color: #fff3cf;
  font-size: 13px;
  font-weight: 500;
}
.reopen-main {
  display: flex;
  align-items: center;
  gap: 9px;
  padding: 0 15px;
}
.reopen-more {
  width: 37px;
}
.panes {
  display: grid;
  grid-template-columns: 1fr 367px;
  flex: 1;
  min-height: 0;
}

/* messages */
.chat {
  display: flex;
  flex-direction: column;
  min-height: 0;
  border-right: 1px solid #edf0f3;
}
.messages {
  position: relative;
  display: flex;
  flex-direction: column;
  gap: 4px;
  flex: 1;
  min-height: 0;
  overflow: hidden;
  padding: 7px 15px 0 16px;
  background: #f8f9fc;
}
.handle {
  position: absolute;
  right: -2px;
  top: 40px;
  width: 24px;
  height: 24px;
  border-radius: 50%;
  background: #f1f2f5;
}
.handle::after {
  content: "";
  position: absolute;
  left: 10px;
  top: 8px;
  border: 4px solid transparent;
  border-left: 5px solid #333;
  border-right: 0;
}
.msg {
  display: flex;
  align-items: flex-end;
  flex: none;
}
.msg.out {
  justify-content: flex-end;
}
.msg.in {
  margin-bottom: 11px;
}
.bubble {
  max-width: 439px;
  min-height: 32px;
  padding: 8px 15px 7px;
  border-radius: 7px 3px 3px 7px;
  background: #5845ae;
  color: #eceaf8;
  font-size: 13px;
  line-height: 21px;
}
.bubble p {
  font-weight: 400;
}
.bubble p + p {
  margin-top: 6px;
}
.bubble b {
  font-weight: 700;
  color: #fff;
}
.in .bubble {
  max-width: 460px;
  padding: 8px 8px 8px 15px;
  border-radius: 5px;
  background: #fff;
  color: #36393e;
  box-shadow: 0 1px 2px rgba(0, 0, 0, 0.03);
}
.hidden-text.order {
  width: 41px;
  opacity: 0.5;
}
.order-form {
  width: 356px;
  height: 96px;
}
.stamp {
  display: flex;
  align-items: center;
  gap: 15px;
  font-size: 10px;
  line-height: 16px;
  color: #dcd8f2;
}
.in .stamp {
  color: #a9adb3;
}
.ticks {
  width: 14px;
  height: 9px;
  fill: none;
  stroke: #8bbcd2;
  stroke-width: 2;
}
.more {
  width: 20px;
  height: 12px;
  margin: 0 20px 9px;
  color: #4d5056;
}
.more .icon {
  width: 10px;
  height: 10px;
}
.bot {
  width: 14px;
  height: 14px;
  margin: 0 0 4px 8px;
  border-radius: 50%;
  background: #cbe5fb;
  color: #3b94dd;
  font-size: 7px;
  line-height: 14px;
  text-align: center;
}

/* reply box */
.banner {
  display: flex;
  align-items: center;
  justify-content: center;
  gap: 26px;
  height: 45px;
  padding-right: 8px;
  background: #d6d9e0;
  font-size: 11px;
  font-weight: 500;
}
.assign {
  display: flex;
  align-items: center;
  gap: 9px;
  font-size: 11px;
  font-weight: 500;
  color: #3b94dd;
}
.banner .assign {
  font-size: 9px;
}
.assign .icon {
  width: 9px;
  height: 9px;
}
.tabs {
  display: flex;
  height: 38px;
  padding-right: 12px;
  background: #f8f9fb;
}
.tab {
  padding: 0 15px;
  font-size: 13px;
  font-weight: 500;
}
.tab.active {
  background: #fefefe;
  color: #3b94dd;
}
.tab.note {
  color: #5e5224;
}
.tabs .plain {
  margin-left: auto;
}
.editor {
  padding: 0 15px 2px 15px;
}
.tools {
  display: flex;
  gap: 24px;
  height: 40px;
  color: #66696f;
}
.tools .plain {
  width: 10px;
}
.tools .plain .icon {
  width: 10px;
  height: 10px;
}
.tools .strong .icon {
  stroke-width: 4;
}
.off {
  opacity: 0.35;
}
.editor textarea {
  display: block;
  width: 100%;
  height: 103px;
  padding-top: 4px;
  resize: none;
  outline: 0;
  overflow: hidden;
  font-size: 13px;
  line-height: 28px;
}
.actions {
  display: flex;
  gap: 7px;
}
.ai {
  position: relative;
  display: flex;
  align-items: center;
  gap: 8px;
  padding: 0 12px;
  border-radius: 5px;
  background: linear-gradient(100deg, #cddcf9, #e5d3f7);
  font-size: 11px;
  font-weight: 500;
}
.pulse {
  position: absolute;
  right: -4px;
  top: -4px;
  width: 11px;
  height: 11px;
  border-radius: 50%;
  background: #72b3f8;
  box-shadow: 0 0 0 4px #d3e8fd;
}
.send {
  margin-left: auto;
  padding: 0 12px;
  border-radius: 5px;
  background: #1f93ff;
  color: #e9f4ff;
  font-size: 11px;
  font-weight: 500;
}

/* details */
.details {
  min-height: 0;
  overflow: hidden;
}
.contact {
  padding: 16px 22px 14px 15px;
}
.contact-top {
  display: flex;
  justify-content: space-between;
  height: 52px;
  margin-bottom: 10px;
}
.avatar.big {
  width: 52px;
  height: 52px;
  font-size: 20px;
}
.contact-top .plain {
  height: 36px;
}
.contact-name, .contact-row {
  display: flex;
  align-items: center;
  color: #4d5056;
}
.contact-name {
  gap: 5px;
  height: 19px;
  margin-bottom: 6px;
}
.contact-name .small {
  width: 10px;
  height: 10px;
  margin-left: 5px;
}
.contact-row {
  gap: 9px;
  height: 26px;
  font-size: 13px;
  color: #b9bdc3;
}
.mail-row {
  height: 30px;
}
.contact-row .icon {
  color: #4d5056;
}
.hidden-text.mail {
  width: 128px;
  height: 10px;
  background: #dcdcde;
}
.contact-actions {
  display: flex;
  gap: 7px;
  margin-top: 7px;
}
.square.blue {
  background: #1f93ff;
  color: #fff;
}
.square.sky {
  background: #ebf5fe;
  color: #3f648a;
}
.section {
  display: flex;
  align-items: center;
  justify-content: space-between;
  width: 100%;
  height: 39px;
  padding: 0 12px 0 15px;
  background: #f1f3f5;
  border-top: 1px solid #eceef0;
  border-bottom: 1px solid #eceef0;
  font-size: 13px;
  font-weight: 500;
  color: #33363b;
}
.section .icon {
  width: 8px;
  height: 8px;
  stroke-width: 3;
  color: #3b94dd;
}
.form {
  padding: 10px 11px 17px 15px;
}
.label-row {
  display: flex;
  align-items: center;
  justify-content: space-between;
  height: 29px;
  font-size: 13px;
  font-weight: 500;
}
.select {
  position: relative;
  margin-bottom: 3px;
}
.select select {
  display: block;
  width: 100%;
  height: 37px;
  padding: 0 30px 0 10px;
  border: 1px solid #dfe2e5;
  border-radius: 4px;
  appearance: none;
  background: #fff;
  font-size: 13px;
  font-weight: 500;
}
.select .icon {
  position: absolute;
  right: 9px;
  top: 12px;
  stroke-width: 3;
}
.select.with-avatar select {
  padding-left: 39px;
}
.mini-avatar {
  position: absolute;
  left: 10px;
  top: 8px;
  width: 22px;
  height: 22px;
  border-radius: 50%;
  background: #c8e2fc;
  color: #2b8fe0;
  font-size: 9px;
  line-height: 22px;
  text-align: center;
}
.tag-add {
  display: flex;
  align-items: center;
  gap: 9px;
  height: 22px;
  padding: 0 11px;
  border-radius: 3px;
  background: #ebf5fe;
  color: #2c5f8f;
  font-size: 10px;
  font-weight: 500;
}
.tag-add .icon {
  width: 9px;
  height: 9px;
}
.macros {
  padding: 4px 14px 3px 18px;
}
.macro {
  display: flex;
  align-items: center;
  gap: 4px;
  height: 37px;
  font-size: 13px;
  font-weight: 500;
  color: #5d6066;
}
.macro span {
  flex: 1;
}
.mini.dark {
  color: #3a3d42;
}
.facts {
  padding: 11px 15px;
}
.facts h4 {
  font-size: 13px;
  line-height: 22px;
  font-weight: 600;
}
.facts p {
  padding-top: 2px;
  font-size: 13px;
  line-height: 19px;
  font-weight: 400;
}
```
